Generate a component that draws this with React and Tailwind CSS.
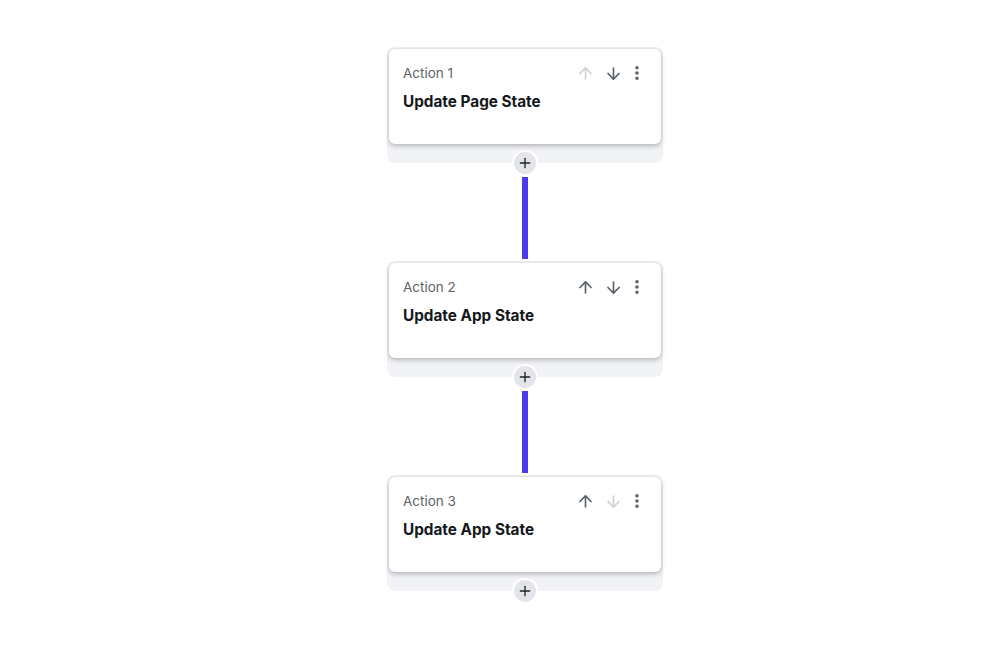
import { ArrowUp, ArrowDown, EllipsisVertical, Plus } from "lucide-react";

const actions = [
  { id: 1, title: "Update Page State", upDisabled: true, downDisabled: false },
  { id: 2, title: "Update App State", upDisabled: false, downDisabled: false },
  { id: 3, title: "Update App State", upDisabled: false, downDisabled: true },
];

function ActionCard({ action }) {
  const iconColor = (disabled) => (disabled ? "text-[#cdd1d6]" : "text-[#5b6169]");

  return (
    <div className="relative w-[276px] rounded-lg bg-[#f1f3f7] px-[2px] pt-[2px] pb-[19px]">
      <div className="h-[95px] rounded-md bg-white px-[14px] pt-[14px] shadow-[0_2px_5px_rgba(0,0,0,0.25),0_0_2px_rgba(0,0,0,0.08)]">
        <div className="flex items-center justify-between">
          <span className="text-[13.5px] text-[#5f6368]">Action {action.id}</span>
          <div className="mr-[1px] flex items-center">
            <ArrowUp size={19} strokeWidth={2.1} className={iconColor(action.upDisabled)} />
            <ArrowDown size={19} strokeWidth={2.1} className={`ml-[9px] ${iconColor(action.downDisabled)}`} />
            <EllipsisVertical size={18} strokeWidth={2.8} className="ml-[5px] text-[#5b6169]" />
          </div>
        </div>
        <div className="mt-[8px] text-[15.3px] font-bold text-[#14181b]">{action.title}</div>
      </div>
      <button className="absolute bottom-0 left-1/2 flex h-[26px] w-[26px] -translate-x-1/2 translate-y-1/2 items-center justify-center rounded-full border-2 border-white bg-[#e3e5ea] text-[#1f2328]">
        <Plus size={16} strokeWidth={2} />
      </button>
    </div>
  );
}

export default function App() {
  return (
    <div className="flex min-h-[647px] w-full justify-center bg-white pl-[54px] pt-[47px] font-['Inter',sans-serif]">
      <div className="flex flex-col items-center">
        {actions.map((a, i) => (
          <div key={a.id} className="flex flex-col items-center">
            <ActionCard action={a} />
            {i < actions.length - 1 && (
              <div className="mt-[14px] mb-[2px] h-[82px] w-[6px] bg-[#4b3ae6]" />
            )}
          </div>
        ))}
      </div>
    </div>
  );
}
